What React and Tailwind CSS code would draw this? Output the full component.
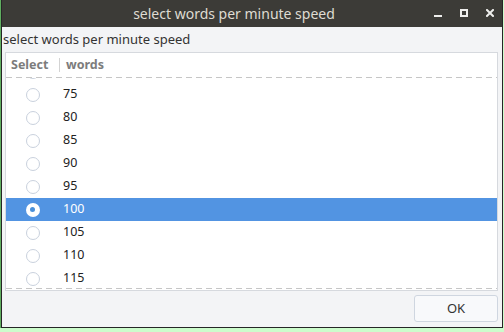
import React, { useState } from 'react';

const SPEEDS = [70, 75, 80, 85, 90, 95, 100, 105, 110, 115];
const DASH = 'h-px bg-[repeating-linear-gradient(to_right,#c6c6c6_0_6px,transparent_6px_10px)]';

function Radio({ checked }) {
  if (checked) {
    return (
      <span className="w-[14px] h-[14px] rounded-full bg-white flex items-center justify-center">
        <span className="w-[5px] h-[5px] rounded-full bg-[#4a90d9]" />
      </span>
    );
  }
  return <span className="w-[14px] h-[14px] rounded-full bg-white border border-[#c9d1dd]" />;
}

export default function App() {
  const [speed, setSpeed] = useState(100);

  return (
    <div className="w-[504px] h-[332px] bg-[#ccfccc] overflow-hidden font-['Noto_Sans',sans-serif]">
      <div className="w-[503px] h-[328px] border-l border-[#5fae5f]">
        <div className="h-full flex flex-col border-l border-r border-b border-[#262626] bg-[#f3f4f6]">
          {/* Title bar */}
          <div className="h-[27px] shrink-0 bg-[#3c3b37] flex items-center relative">
            <span className="flex-1 text-center text-[14px] text-[#dfdbd2] leading-none pr-[36px]">select words per minute speed</span>
            <div className="absolute right-[8px] top-[9px] flex items-start gap-[18px]">
              <span className="w-[8px] h-[2px] mt-[6px] bg-[#eeeeec]" />
              <span className="w-[8px] h-[8px] border-2 border-[#eeeeec]" />
              <svg width="8" height="8" viewBox="0 0 8 8">
                <path d="M1 1 L7 7 M7 1 L1 7" stroke="#eeeeec" strokeWidth="2" strokeLinecap="square" />
              </svg>
            </div>
          </div>

          {/* Body */}
          <div className="flex-1 flex flex-col px-[3px] pt-[2px] pb-[4px]">
            <p className="text-[13px] text-[#333] leading-[20px] -ml-[2px]">select words per minute speed</p>

            <div className="mt-[3px] h-[239px] bg-white border border-[#d6d9de] flex flex-col mr-[1px]">
              <div className="h-[24px] shrink-0 flex items-center text-[12.5px] font-bold text-[#7c7c7c]">
                <span className="pl-[5px] w-[53px]">Select</span>
                <span className="w-px h-[14px] bg-[#d3d3d3]" />
                <span className="pl-[6px]">words</span>
              </div>
              <div className={DASH} />
              <div className="flex-1 overflow-hidden">
                <div className="-mt-[18px]">
                  {SPEEDS.map(s => {
                    const sel = s === speed;
                    return (
                      <div
                        key={s}
                        onClick={() => setSpeed(s)}
                        className={`h-[23px] flex items-center text-[12.5px] ${sel ? 'bg-[#5294e2] text-white' : 'text-[#222]'}`}
                      >
                        <span className="w-[53px] flex justify-center">
                          <Radio checked={sel} />
                        </span>
                        <span className="pl-[4px]">{s}</span>
                      </div>
                    );
                  })}
                </div>
              </div>
              <div className={DASH} />
              <div className="h-[1px]" />
            </div>

            <div className="flex justify-end mt-[4px] mr-[1px]">
              <button className="w-[84px] h-[27px] rounded-[3px] border border-[#cfd6e0] bg-[#f8f9fb] text-[13px] text-[#333]">OK</button>
            </div>
          </div>
        </div>
      </div>
    </div>
  );
}
